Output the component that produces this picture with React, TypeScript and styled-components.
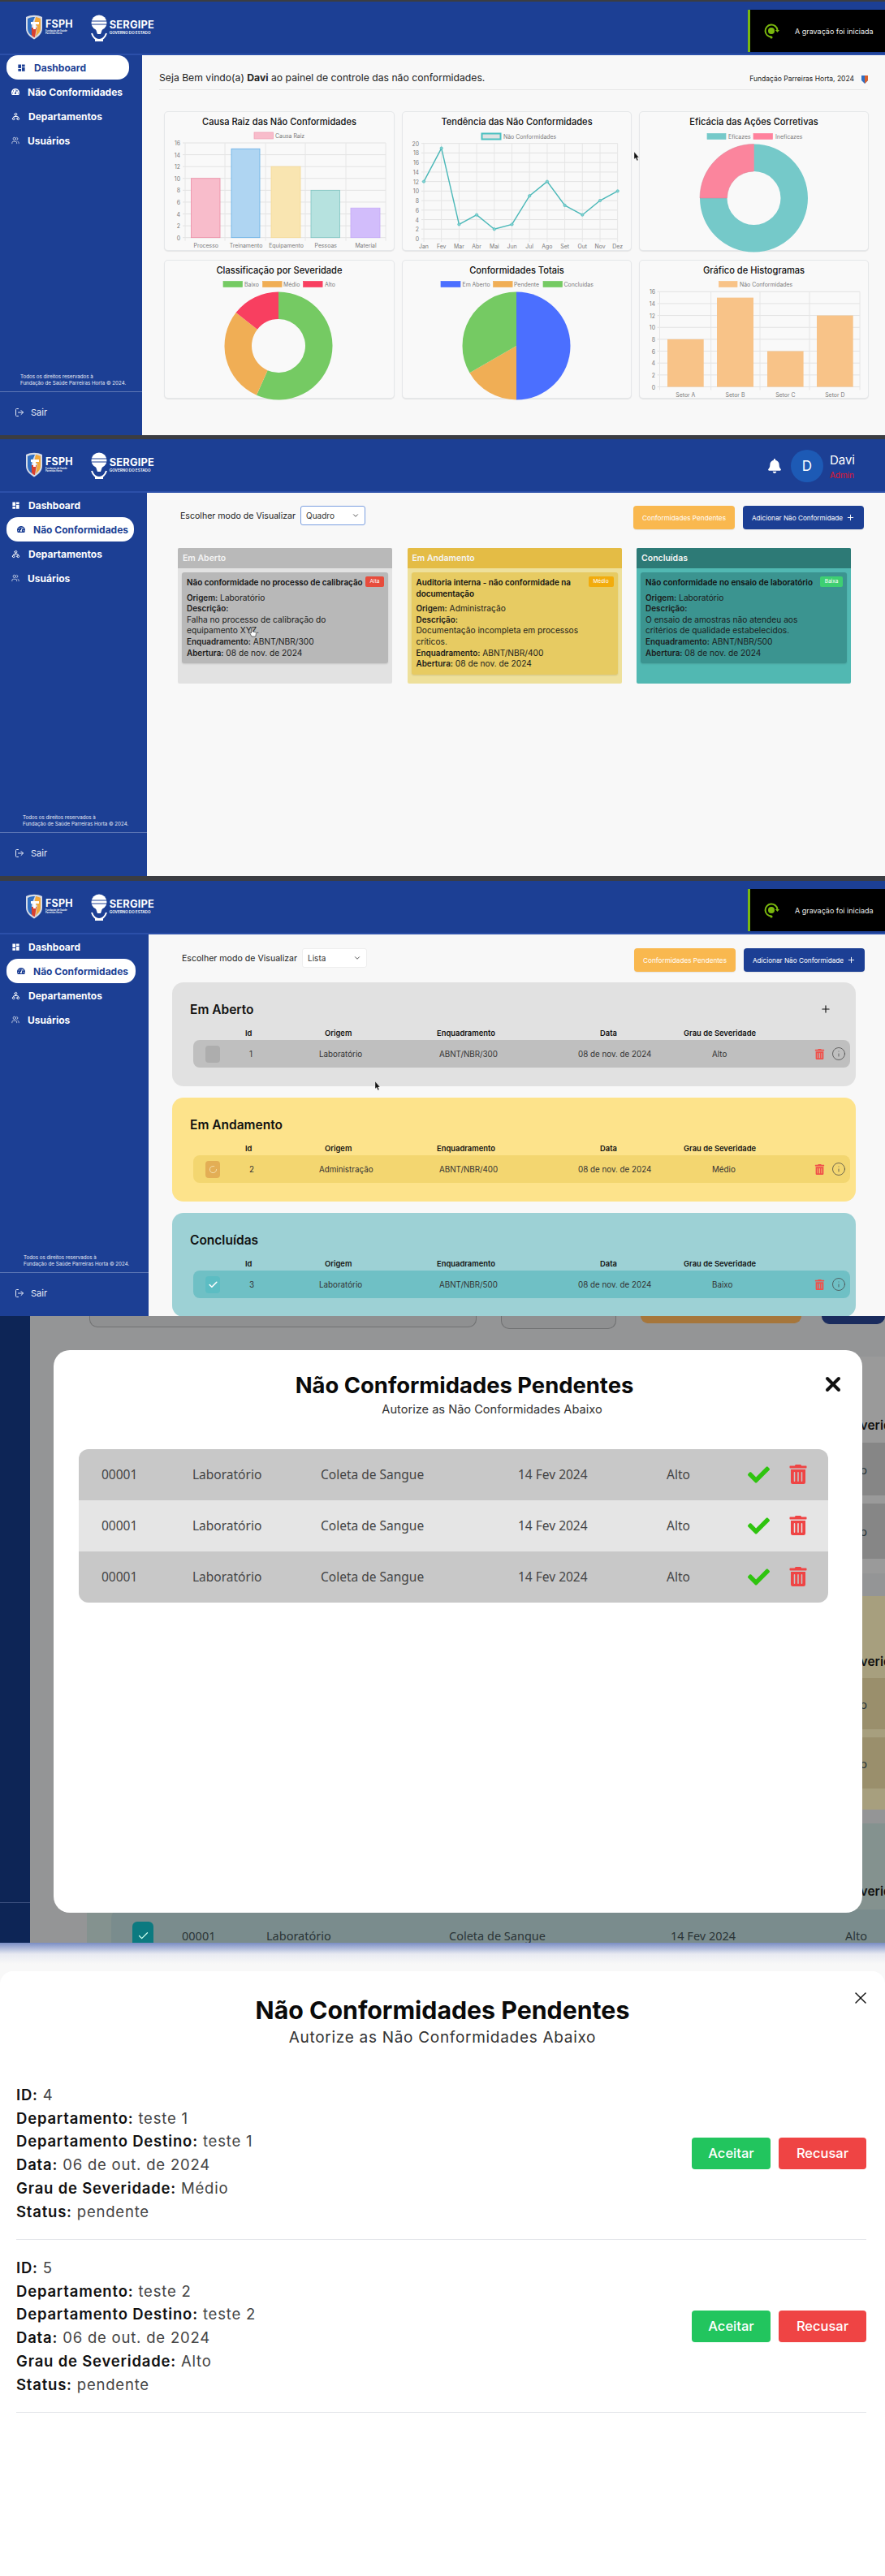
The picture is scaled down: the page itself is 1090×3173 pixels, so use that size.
import React from "react";
import styled, { createGlobalStyle } from "styled-components";
import { Check, ChevronDown, GitFork, Info, LoaderCircle, LogOut, Plus, Users, X } from "lucide-react";
import { FaBell, FaCheck, FaTachometerAlt, FaTrashAlt } from "react-icons/fa";
import { MdDashboard } from "react-icons/md";

const Global = createGlobalStyle`
  html, body { margin: 0; padding: 0; background: #fff; }
  * { box-sizing: border-box; }
  body { font-family: Inter, "Noto Sans", "Liberation Sans", sans-serif; color: #111; }
`;

const BLUE = "#1c3f94";

const Page = styled.div`width: 1090px; display: flex; flex-direction: column;`;
const Frame = styled.section<{ $h: number }>`height: ${p => p.$h}px; display: flex; flex-direction: column; overflow: hidden; position: relative;`;
const TopLine = styled.div<{ $h: number }>`height: ${p => p.$h}px; background: #3b3d42; flex: none;`;
const Header = styled.header`flex: none; height: 66px; background: ${BLUE}; border-bottom: 2px solid #2b4fa9; display: flex; align-items: flex-start; justify-content: space-between; padding: 16px 37px 0 31px; position: relative;`;
const Logos = styled.div`display: flex; align-items: flex-start; gap: 22px;`;
const Logo = styled.div`display: flex; gap: 3px; align-items: center; color: #fff;`;
const LogoText = styled.div`display: flex; flex-direction: column; line-height: 1;`;
const LogoName = styled.span<{ $size: number }>`font-size: ${p => p.$size}px; font-weight: 700; letter-spacing: .2px;`;
const LogoSub = styled.span<{ $size: number }>`font-size: ${p => p.$size}px; font-weight: 600; margin-top: 1px; white-space: nowrap;`;
const Toast = styled.div<{ $top: number }>`position: absolute; left: 921px; top: ${p => p.$top}px; width: 169px; height: 52px; background: #000; border-left: 3px solid #7ab80e; display: flex; align-items: center; gap: 16px; padding-left: 15px; color: #eee; font-size: 9px; white-space: nowrap;`;
const UserBox = styled.div`display: flex; align-items: center; margin-top: -3px;`;
const Bell = styled.span`color: #fff; font-size: 18px; display: flex; margin-right: 11px;`;
const Avatar = styled.div`width: 40px; height: 40px; border-radius: 50%; background: #1d5ab5; color: #fff; display: flex; align-items: center; justify-content: center; font-size: 17px; margin-right: 8px;`;
const UserText = styled.div`display: flex; flex-direction: column; line-height: 1; gap: 6px;`;
const UserName = styled.span`color: #fff; font-size: 15px;`;
const UserRole = styled.span`color: #e5132b; font-size: 10px;`;
const Body = styled.div`flex: 1; min-height: 0; display: flex;`;
const Sidebar = styled.aside<{ $w: number }>`flex: none; width: ${p => p.$w}px; background: ${BLUE}; display: flex; flex-direction: column; color: #fff;`;
const Nav = styled.nav`flex: 1; display: flex; flex-direction: column;`;
const NavItem = styled.div<{ $on?: boolean }>`height: 30px; display: flex; align-items: center; font-size: 12px; font-weight: 700; white-space: nowrap;
  ${p => p.$on ? `background:#fff; color:${BLUE}; border-radius: 14px; margin: 0 16px 0 8px; padding-left: 13px; gap: 10px;` : `color:#fff; padding-left: 14px; gap: 10px;`}`;
const SideNote = styled.p<{ $pad: number }>`margin: 0; padding: 0 0 5px ${p => p.$pad}px; font-size: 6.2px; line-height: 8.6px; color: #e8ecf6; white-space: nowrap;`;
const Exit = styled.div`height: 54px; border-top: 1px solid #5d77b5; display: flex; align-items: center; gap: 8px; padding: 0 0 4px 18px; font-size: 11px; color: #e9edf7;`;
const Main = styled.main`flex: 1; min-width: 0; background: #f8f8f8; display: flex; flex-direction: column;`;

const WelcomeBar = styled.div`margin: 0 21px; padding-top: 20px; height: 43px; border-bottom: 1px solid #e6e6e6; display: flex; justify-content: space-between;`;
const Welcome = styled.span`font-size: 12.2px; color: #222; white-space: nowrap;`;
const Org = styled.span`font-size: 8.5px; color: #222; display: flex; align-items: center; gap: 9px; height: 18px; white-space: nowrap;`;
const ChartGrid = styled.div`margin: 27px 21px 0 28px; display: grid; grid-template-columns: 282px 281px 281px; grid-template-rows: 170px 169px; column-gap: 11px; row-gap: 13px;`;
const Card = styled.div`background: #f9f9f9; border-radius: 4px; box-shadow: 0 0 0 1px #e5e7e9, 0 1px 1px 1px #e4e4e4; display: flex; flex-direction: column;`;
const CardTitle = styled.h3`margin: 0; height: 30px; padding-top: 3px; line-height: 18px; font-size: 11.1px; font-weight: 500; text-align: center; color: #111; white-space: nowrap;`;
const ChartSvg = styled.svg`display: block; overflow: visible; font-family: Inter, sans-serif; font-size: 6.9px; fill: #7a7a7a;`;

const Toolbar = styled.div<{ $pad: string }>`padding: ${p => p.$pad}; display: flex; justify-content: space-between; align-items: flex-start; flex: none;`;
const ModeGroup = styled.div`display: flex; align-items: center; gap: 6px; height: 24px;`;
const ModeLabel = styled.span`font-size: 10.6px; color: #222; white-space: nowrap;`;
const SelectBox = styled.div<{ $focus?: boolean }>`width: 80px; height: 24px; background: #fff; border-radius: 3px; border: 1px solid ${p => p.$focus ? "#7c9fe0" : "#eeeeee"}; display: flex; align-items: center; justify-content: space-between; padding: 0 6px; font-size: 10px; color: #333;`;
const Actions = styled.div`display: flex; gap: 10px;`;
const ActionBtn = styled.div<{ $bg: string; $w: number }>`width: ${p => p.$w}px; height: 29px; background: ${p => p.$bg}; border-radius: 4px; color: #fff; font-size: 8.2px; display: flex; align-items: center; justify-content: center; gap: 4px; white-space: nowrap; box-shadow: 0 1px 1px rgba(0,0,0,.08);`;

const Board = styled.div`margin: 23px 0 0 38px; display: grid; grid-template-columns: 264px 264px 264px; column-gap: 18.5px;`;
const Column = styled.div<{ $bg: string }>`height: 167px; background: ${p => p.$bg}; border-radius: 2px; overflow: hidden;`;
const ColumnHead = styled.div<{ $bg: string }>`height: 25px; background: ${p => p.$bg}; color: #f4f4f4; font-size: 10.5px; font-weight: 600; padding-left: 6px; display: flex; align-items: center;`;
const Ticket = styled.article<{ $bg: string }>`margin: 5px 5px 0; background: ${p => p.$bg}; border-radius: 3px; padding: 6px 5px 6px 6px; font-size: 10.2px; line-height: 13.6px; color: #1b1b1b; box-shadow: 0 1px 2px rgba(0,0,0,.12);`;
const TicketTop = styled.div`display: flex; justify-content: space-between; align-items: flex-start; margin-bottom: 5px;`;
const TicketTitle = styled.strong`font-size: 9.9px; font-weight: 600; color: #111; white-space: nowrap;`;
const Badge = styled.span<{ $bg: string; $w: number }>`flex: none; width: ${p => p.$w}px; height: 13px; margin-top: -1px; background: ${p => p.$bg}; border-radius: 2px; color: #fff; font-size: 6.5px; line-height: 13px; text-align: center;`;
const Line = styled.div`white-space: nowrap;`;
const Key = styled.b`font-size: 9.9px; font-weight: 600;`;

const Panels = styled.div`margin: 13px 0 0 29px; width: 842px; display: flex; flex-direction: column; gap: 14px;`;
const Panel = styled.div<{ $bg: string }>`flex: none; height: 128px; background: ${p => p.$bg}; border-radius: 14px;`;
const PanelTop = styled.div`height: 43px; padding: 23px 30px 0 22px; display: flex; justify-content: space-between; align-items: center;`;
const PanelTitle = styled.h2`margin: 0; font-size: 15.5px; font-weight: 600; color: #111;`;
const HeadRow = styled.div`margin: 11px 0 0 26px; height: 17px; display: grid; grid-template-columns: 64px 98px 138px 201px 103px auto; font-size: 9.4px; font-weight: 600; line-height: 17px; color: #111; white-space: nowrap;`;
const ItemRow = styled.div<{ $bg: string }>`margin: 0 7px 0 26px; height: 34px; padding-left: 15px; border-radius: 8px; background: ${p => p.$bg}; display: grid; grid-template-columns: 54px 86px 148px 171px 165px 126px auto; align-items: center; font-size: 9.8px; color: #333; white-space: nowrap;`;
const Tick = styled.div<{ $bg: string }>`width: 18px; height: 21px; border-radius: 4px; background: ${p => p.$bg}; color: #fff; display: flex; align-items: center; justify-content: center;`;
const RowTools = styled.div`display: flex; align-items: center; gap: 8px;`;
const Trash = styled.span<{ $size: number; $c: string }>`display: flex; color: ${p => p.$c}; font-size: ${p => p.$size}px;`;

const Dim = styled.div`height: 100%; display: flex; background: #949596;`;
const NavyStrip = styled.div`flex: none; width: 37px; background: #0d2556;`;
const NavyTop = styled.div`height: 723px; border-bottom: 1px solid #3a4f7d;`;
const DimContent = styled.div`flex: 1; min-width: 0; display: flex; flex-direction: column;`;
const DimTop = styled.div`height: 50px; flex: none; padding-left: 73px; display: flex; align-items: flex-start;`;
const GhostBox = styled.div<{ $w: number; $h: number; $bg: string; $ml: number }>`width: ${p => p.$w}px; height: ${p => p.$h}px; margin-left: ${p => p.$ml}px; background: ${p => p.$bg}; border-radius: 0 0 10px 10px; border: 1px solid ${p => p.$bg === "#8f9091" ? "#707172" : p.$bg}; border-top: 0;`;
const GhostPanel = styled.div<{ $bg: string; $pad: number; $bottom: number; $gap: number }>`flex: none; margin-left: 70px; padding: ${p => p.$pad}px 0 ${p => p.$bottom}px 30px; margin-bottom: ${p => p.$gap}px; background: ${p => p.$bg}; border-radius: 14px 0 0 14px;`;
const GhostHead = styled.div`height: 20px; line-height: 20px; padding-left: 841px; font-size: 15.5px; font-weight: 600; color: #111; white-space: nowrap;`;
const GhostRow = styled.div<{ $bg: string; $h: number; $mt: number }>`height: ${p => p.$h}px; margin-top: ${p => p.$mt}px; padding-left: 26px; background: ${p => p.$bg}; border-radius: 10px 0 0 10px; display: grid; grid-template-columns: 61px 104px 225px 273px 215px 60px; align-items: center; font-family: "Noto Sans", sans-serif; font-size: 14.5px; color: #2b3538; white-space: nowrap;`;
const GhostCell = styled.span<{ $pos?: number }>`${p => p.$pos ? `grid-column: ${p.$pos};` : ""}`;
const GhostTick = styled.div`width: 26px; height: 36px; border-radius: 6px; background: #0c7a80; color: #cfe; display: flex; align-items: center; justify-content: center; margin-top: 2px;`;

const ModalBox = styled.div`position: absolute; left: 66px; top: 42px; width: 996px; height: 693px; background: #fff; border-radius: 20px; padding-top: 26px;`;
const ModalTitle = styled.h2<{ $size: number; $shift: number }>`margin: 0; padding-left: ${p => p.$shift}px; font-size: ${p => p.$size}px; line-height: 1.3; font-weight: 700; text-align: center; color: #0a0a0a; white-space: nowrap;`;
const ModalSub = styled.p<{ $size: number; $shift: number; $track: number }>`margin: 2px 0 0; padding-left: ${p => p.$shift}px; font-size: ${p => p.$size}px; letter-spacing: ${p => p.$track}px; text-align: center; color: #333; white-space: nowrap;`;
const CloseBtn = styled.span<{ $r: number; $t: number }>`position: absolute; right: ${p => p.$r}px; top: ${p => p.$t}px; display: flex; color: #111;`;
const PendingTable = styled.div`margin: 40px 0 0 31px; width: 923px; border-radius: 12px; overflow: hidden;`;
const PendingRow = styled.div<{ $bg: string }>`height: 63px; background: ${p => p.$bg}; padding-left: 28px; display: grid; grid-template-columns: 112px 158px 243px 183px 100px 50px auto; align-items: center; font-family: "Noto Sans", sans-serif; font-size: 15.5px; color: #444;`;
const CheckMark = styled.span`display: flex; color: #2fc40f; font-size: 27px;`;

const SheetFrame = styled.div`height: 100%; background: linear-gradient(#7a8dc4 0, #e8eaf2 14px, #f8f8f8 26px); padding-top: 35px; display: flex;`;
const Sheet = styled.div`flex: 1; background: #fff; border-radius: 16px 16px 0 0; padding-top: 29px; position: relative;`;
const SheetList = styled.div`margin: 25px 23px 0 20px;`;
const Item = styled.div`display: flex; justify-content: space-between; align-items: center; padding: 20px 0; height: 213px; border-bottom: 1px solid #e5e7eb;`;
const ItemLines = styled.div`font-size: 18.5px; letter-spacing: .8px; line-height: 28.9px; color: #444; white-space: nowrap;`;
const ItemKey = styled.b`font-weight: 600; color: #111;`;
const Decide = styled.div`display: flex; gap: 10px;`;
const DecideBtn = styled.div<{ $bg: string; $w: number }>`width: ${p => p.$w}px; height: 39px; background: ${p => p.$bg}; color: #fff; border-radius: 4px; font-size: 16.5px; font-weight: 500; display: flex; align-items: center; justify-content: center;`;
const Cursor = styled.svg<{ $x: number; $y: number }>`position: absolute; left: ${p => p.$x}px; top: ${p => p.$y}px;`;

/* ---------- logos ---------- */
const LogoBar = () => (
  <Logos>
    <Logo>
      <svg width="22" height="31" viewBox="0 0 22 31">
        <path d="M1 3 C7 0 15 0 21 3 L21 17 C21 24 15 28 11 30.5 C7 28 1 24 1 17 Z" fill="#d6dbe6" />
        <path d="M3 5 C7 3 10 3 12 3 L8 12 L8 26 C5 24 3 21 3 17 Z" fill="#2f6fc4" />
        <path d="M8 16 L14 16 L12 28 C10 28 8 26 8 25 Z" fill="#d8402f" />
        <path d="M13 3 C15 3 17 4 19 5 L19 17 C19 21 16 24 13 27 L15 14 L11 12 Z" fill="#f2a93b" />
        <path d="M7 9 L17 9 L17 12 L13 12 L13 18 L10 18 L10 12 L7 12 Z" fill="#fff" />
      </svg>
      <LogoText>
        <LogoName $size={12.5}>FSPH</LogoName>
        <LogoSub $size={2.8}>Fundação de Saúde<br />Parreiras Horta</LogoSub>
      </LogoText>
    </Logo>
    <Logo>
      <svg width="20" height="33" viewBox="0 0 20 33">
        <circle cx="10" cy="10" r="9.5" fill="#fff" />
        <path d="M1 8 H19 M1 12 H19" stroke={BLUE} strokeWidth="1" />
        <path d="M6 18 L8 24 H12 L14 18 Z" fill="#fff" />
        <path d="M1 23 C3 29 7 31 10 31 C13 31 17 29 19 23" fill="none" stroke="#fff" strokeWidth="2" />
        <rect x="5" y="30" width="10" height="3" fill="#fff" />
      </svg>
      <LogoText>
        <LogoName $size={12.8}>SERGIPE</LogoName>
        <LogoSub $size={4.6}>GOVERNO DO ESTADO</LogoSub>
      </LogoText>
    </Logo>
  </Logos>
);

const RecToast = ({ top }: { top: number }) => (
  <Toast $top={top}>
    <svg width="24" height="24" viewBox="0 0 24 24" fill="none">
      <circle cx="11" cy="12" r="4" fill="#7ab80e" />
      <path d="M18.5 11 A7.5 7.5 0 1 0 11 19.5" stroke="#7ab80e" strokeWidth="2" />
      <circle cx="11" cy="20" r="1.6" fill="#7ab80e" />
      <path d="M15.8 11 L21 11 L18.5 14 Z" fill="#7ab80e" />
    </svg>
    A gravação foi iniciada
  </Toast>
);

/* ---------- shell ---------- */
const items = ["Dashboard", "Não Conformidades", "Departamentos", "Usuários"];
const navIcon = (i: number) =>
  i === 0 ? <MdDashboard size={11} /> : i === 1 ? <FaTachometerAlt size={10} /> : i === 2 ? <GitFork size={11} style={{ transform: "rotate(180deg)" }} /> : <Users size={10} strokeWidth={1.5} />;

const Shell = ({ h, line, w, active, right, toastTop, children }: { h: number; line: number; w: number; active: number; right?: React.ReactNode; toastTop?: number; children: React.ReactNode }) => (
  <Frame $h={h}>
    <TopLine $h={line} />
    <Header>
      <LogoBar />
      {right}
    </Header>
    {toastTop !== undefined && <RecToast top={toastTop} />}
    <Body>
      <Sidebar $w={w}>
        <Nav>
          {items.map((t, i) => (
            <NavItem key={t} $on={i === active}>{navIcon(i)}{t}</NavItem>
          ))}
        </Nav>
        <SideNote $pad={(w - 125) / 2}>Todos os direitos reservados à<br />Fundação de Saúde Parreiras Horta © 2024.</SideNote>
        <Exit><LogOut size={12} />Sair</Exit>
      </Sidebar>
      <Main>{children}</Main>
    </Body>
  </Frame>
);

/* ---------- charts ---------- */
type Leg = { x: number; w: number; fill: string; stroke?: string; tx: number; t: string };
const Legend = ({ y, h, items }: { y: number; h: number; items: Leg[] }) => (
  <g>
    {items.map(l => (
      <g key={l.t}>
        <rect x={l.x} y={y - h / 2} width={l.w} height={h} fill={l.fill} stroke={l.stroke || l.fill} strokeWidth={l.stroke === "#4bc0c0" ? 2 : 0.7} />
        <text x={l.tx} y={y + 2.5}>{l.t}</text>
      </g>
    ))}
  </g>
);

const GridY = ({ x0, x1, y0, yTop, n, max, lx }: { x0: number; x1: number; y0: number; yTop: number; n: number; max: number; lx: number }) => (
  <g>
    {Array.from({ length: n + 1 }, (_, i) => {
      const y = y0 + (yTop - y0) * i / n;
      return (
        <g key={i}>
          <line x1={x0 - 3} x2={x1} y1={y} y2={y} stroke="#e2e2e2" strokeWidth="1" />
          <text x={lx} y={y + 3} textAnchor="end">{max * i / n}</text>
        </g>
      );
    })}
  </g>
);

const GridX = ({ xs, y0, yTop }: { xs: number[]; y0: number; yTop: number }) => (
  <g>{xs.map(x => <line key={x} x1={x} x2={x} y1={yTop} y2={y0 + 4} stroke="#e6e6e6" strokeWidth="1" />)}</g>
);

const polar = (cx: number, cy: number, r: number, deg: number): [number, number] => {
  const a = (deg - 90) * Math.PI / 180;
  return [cx + r * Math.cos(a), cy + r * Math.sin(a)];
};
const arc = (cx: number, cy: number, R: number, r: number, a: number, b: number) => {
  const [x1, y1] = polar(cx, cy, R, a);
  const [x2, y2] = polar(cx, cy, R, b);
  const large = b - a > 180 ? 1 : 0;
  if (r === 0) return `M${cx} ${cy} L${x1} ${y1} A${R} ${R} 0 ${large} 1 ${x2} ${y2} Z`;
  const [x3, y3] = polar(cx, cy, r, b);
  const [x4, y4] = polar(cx, cy, r, a);
  return `M${x1} ${y1} A${R} ${R} 0 ${large} 1 ${x2} ${y2} L${x3} ${y3} A${r} ${r} 0 ${large} 0 ${x4} ${y4} Z`;
};

const View = ({ x, y, w, h, children }: { x: number; y: number; w: number; h: number; children: React.ReactNode }) => (
  <ChartSvg width={w} height={h - 30} viewBox={`${x} ${y + 30} ${w} ${h - 30}`}>{children}</ChartSvg>
);

const RootCause = () => {
  const y0 = 292.7, top = 176, x = [228, 277, 327, 376, 426, 475];
  const sc = (v: number) => y0 - (y0 - top) * v / 16;
  const bars = [
    { l: "Processo", a: 235.5, b: 271, v: 10, f: "#f8bccb", s: "#ec8ba4" },
    { l: "Treinamento", a: 285, b: 320, v: 15, f: "#afd5f2", s: "#63aee6" },
    { l: "Equipamento", a: 334, b: 370, v: 12, f: "#f9e5b1", s: "#f6d995" },
    { l: "Pessoas", a: 383, b: 418.5, v: 8, f: "#b6e2df", s: "#7cc4c0" },
    { l: "Material", a: 432, b: 468, v: 5, f: "#d2bdfb", s: "#c4a8f8" },
  ];
  return (
    <View x={203} y={138} w={282} h={170}>
      <Legend y={167} h={8} items={[{ x: 313, w: 23.5, fill: "#f8bccb", stroke: "#f09db3", tx: 339, t: "Causa Raiz" }]} />
      <GridY x0={228} x1={475} y0={y0} yTop={top} n={8} max={16} lx={222} />
      <GridX xs={x} y0={y0} yTop={top} />
      {bars.map(b => (
        <g key={b.l}>
          <rect x={b.a} y={sc(b.v)} width={b.b - b.a} height={y0 - sc(b.v)} fill={b.f} stroke={b.s} strokeWidth="0.8" />
          <text x={(b.a + b.b) / 2 + 0.5} y={305} textAnchor="middle">{b.l}</text>
        </g>
      ))}
    </View>
  );
};

const Trend = () => {
  const x0 = 522, dx = 21.7, y0 = 294, top = 176.7;
  const vals = [12, 19, 3, 5, 2, 3, 9, 12, 7, 5, 8, 10];
  const m = ["Jan", "Fev", "Mar", "Abr", "Mai", "Jun", "Jul", "Ago", "Set", "Out", "Nov", "Dez"];
  const pts = vals.map((v, i) => [x0 + dx * i, y0 - (y0 - top) * v / 20]);
  return (
    <View x={496} y={138} w={281} h={170}>
      <Legend y={168} h={7} items={[{ x: 593.5, w: 23, fill: "#dfe3e3", stroke: "#4bc0c0", tx: 620, t: "Não Conformidades" }]} />
      <GridY x0={522} x1={760.6} y0={y0} yTop={top} n={10} max={20} lx={516} />
      <GridX xs={pts.map(p => p[0])} y0={y0} yTop={top} />
      <polyline points={pts.map(p => p.join(",")).join(" ")} fill="none" stroke="#4bb8b8" strokeWidth="1.4" />
      {pts.map((p, i) => (
        <g key={m[i]}>
          <circle cx={p[0]} cy={p[1]} r="1.7" fill="#7fd0d0" stroke="#4bb8b8" strokeWidth=".6" />
          <text x={p[0]} y={306} textAnchor="middle">{m[i]}</text>
        </g>
      ))}
    </View>
  );
};

const Efficacy = () => (
  <View x={788} y={138} w={281} h={170}>
    <Legend y={168} h={7} items={[
      { x: 871, w: 23, fill: "#75c9c9", tx: 897, t: "Eficazes" },
      { x: 928, w: 23.5, fill: "#ff829d", tx: 955, t: "Ineficazes" },
    ]} />
    <path d={arc(928.5, 244, 66.5, 33, 0, 270)} fill="#75c9c9" />
    <path d={arc(928.5, 244, 66.5, 33, 270, 360)} fill="#fb859d" stroke="#d77d90" strokeWidth=".5" />
  </View>
);

const Severity = () => (
  <View x={203} y={321} w={282} h={169}>
    <Legend y={350} h={7} items={[
      { x: 275, w: 23.5, fill: "#75ca63", tx: 301, t: "Baixo" },
      { x: 323.6, w: 23.5, fill: "#f0ae55", tx: 349, t: "Médio" },
      { x: 373.6, w: 23.5, fill: "#f83f60", tx: 400, t: "Alto" },
    ]} />
    <path d={arc(343, 426, 66.5, 33, 0, 204)} fill="#75ca63" />
    <path d={arc(343, 426, 66.5, 33, 204, 308)} fill="#f0ae55" />
    <path d={arc(343, 426, 66.5, 33, 308, 360)} fill="#f83f60" />
  </View>
);

const Totals = () => (
  <View x={496} y={321} w={281} h={169}>
    <Legend y={350} h={7} items={[
      { x: 543, w: 24, fill: "#4b6fff", tx: 569.5, t: "Em Aberto" },
      { x: 607.6, w: 23.5, fill: "#f0ae55", tx: 633, t: "Pendente" },
      { x: 669, w: 23.5, fill: "#75ca63", tx: 694.5, t: "Concluídas" },
    ]} />
    <path d={arc(636, 426, 66.5, 0, 0, 180)} fill="#4b6fff" />
    <path d={arc(636, 426, 66.5, 0, 180, 240)} fill="#f0ae55" />
    <path d={arc(636, 426, 66.5, 0, 240, 360)} fill="#75ca63" />
  </View>
);

const Histogram = () => {
  const y0 = 476.5, top = 359.3;
  const sc = (v: number) => y0 - (y0 - top) * v / 16;
  const bars = [
    { l: "Setor A", a: 822, b: 866.7, v: 8 },
    { l: "Setor B", a: 883, b: 928, v: 15 },
    { l: "Setor C", a: 945, b: 989.6, v: 6 },
    { l: "Setor D", a: 1006, b: 1050.7, v: 12 },
  ];
  return (
    <View x={788} y={321} w={281} h={169}>
      <Legend y={350} h={7} items={[{ x: 885.4, w: 22.6, fill: "#f8c388", tx: 911, t: "Não Conformidades" }]} />
      <GridY x0={812.5} x1={1059} y0={y0} yTop={top} n={8} max={16} lx={807} />
      <GridX xs={[812.5, 875.7, 936, 997, 1059]} y0={y0} yTop={top} />
      {bars.map(b => (
        <g key={b.l}>
          <rect x={b.a} y={sc(b.v)} width={b.b - b.a} height={y0 - sc(b.v)} fill="#f8c388" />
          <text x={(b.a + b.b) / 2} y={489} textAnchor="middle">{b.l}</text>
        </g>
      ))}
    </View>
  );
};

const Pointer = ({ x, y }: { x: number; y: number }) => (
  <Cursor $x={x} $y={y} width="8" height="12" viewBox="0 0 8 12"><path d="M1 0 L1 9 L3 7.5 L4.5 11 L6 10.3 L4.6 7 L7 7 Z" fill="#111" stroke="#fff" strokeWidth=".4" /></Cursor>
);

const HandCursor = styled.svg`position: absolute; left: 307px; top: 236px;`;

/* ---------- list + kanban data ---------- */
const Toolbar2 = ({ mode, focus, pad }: { mode: string; focus?: boolean; pad: string }) => (
  <Toolbar $pad={pad}>
    <ModeGroup>
      <ModeLabel>Escolher modo de Visualizar</ModeLabel>
      <SelectBox $focus={focus}>{mode}<ChevronDown size={10} /></SelectBox>
    </ModeGroup>
    <Actions>
      <ActionBtn $bg="#f9b84f" $w={125}>Conformidades Pendentes</ActionBtn>
      <ActionBtn $bg={BLUE} $w={149}>Adicionar Não Conformidade<Plus size={11} /></ActionBtn>
    </Actions>
  </Toolbar>
);

const ListPanel = ({ title, bg, row, tickBg, tick, id, origem, enq, grau, plus }: { title: string; bg: string; row: string; tickBg: string; tick?: React.ReactNode; id: number; origem: string; enq: string; grau: string; plus?: boolean }) => (
  <Panel $bg={bg}>
    <PanelTop>
      <PanelTitle>{title}</PanelTitle>
      {plus && <Plus size={14} color="#111" />}
    </PanelTop>
    <HeadRow>
      <span />
      <span>Id</span>
      <span>Origem</span>
      <span>Enquadramento</span>
      <span>Data</span>
      <span>Grau de Severidade</span>
    </HeadRow>
    <ItemRow $bg={row}>
      <Tick $bg={tickBg}>{tick}</Tick>
      <span>{id}</span>
      <span>{origem}</span>
      <span>{enq}</span>
      <span>08 de nov. de 2024</span>
      <span>{grau}</span>
      <RowTools>
        <Trash $size={13} $c="#f0504a"><FaTrashAlt /></Trash>
        <Info size={18} strokeWidth={1} color="#444" />
      </RowTools>
    </ItemRow>
  </Panel>
);

const pendingRows = ["#c8c8c8", "#e5e5e5", "#c8c8c8"];

const Pending = ({ id, dep, data, grau }: { id: number; dep: string; data: string; grau: string }) => (
  <Item>
    <ItemLines>
      <div><ItemKey>ID:</ItemKey> {id}</div>
      <div><ItemKey>Departamento:</ItemKey> {dep}</div>
      <div><ItemKey>Departamento Destino:</ItemKey> {dep}</div>
      <div><ItemKey>Data:</ItemKey> {data}</div>
      <div><ItemKey>Grau de Severidade:</ItemKey> {grau}</div>
      <div><ItemKey>Status:</ItemKey> pendente</div>
    </ItemLines>
    <Decide>
      <DecideBtn $bg="#22c55e" $w={97}>Aceitar</DecideBtn>
      <DecideBtn $bg="#ef4444" $w={108}>Recusar</DecideBtn>
    </Decide>
  </Item>
);

export default function App() {
  return (
    <Page>
      <Global />
      {/* Dashboard */}
      <Shell h={536} line={2} w={175} active={0} toastTop={12}>
        <WelcomeBar>
          <Welcome>Seja Bem vindo(a) <b>Davi</b> ao painel de controle das não conformidades.</Welcome>
          <Org>Fundação Parreiras Horta, 2024
            <svg width="8" height="11" viewBox="0 0 8 11"><path d="M0 1 H8 V7 L4 11 L0 7 Z" fill="#2f6fc4" /><path d="M4 1 H8 V7 L4 11 Z" fill="#d8602f" /></svg>
          </Org>
        </WelcomeBar>
        <ChartGrid>
          <Card><CardTitle>Causa Raiz das Não Conformidades</CardTitle><RootCause /></Card>
          <Card><CardTitle>Tendência das Não Conformidades</CardTitle><Trend /></Card>
          <Card><CardTitle>Eficácia das Ações Corretivas</CardTitle><Efficacy /></Card>
          <Card><CardTitle>Classificação por Severidade</CardTitle><Severity /></Card>
          <Card><CardTitle>Conformidades Totais</CardTitle><Totals /></Card>
          <Card><CardTitle>Gráfico de Histogramas</CardTitle><Histogram /></Card>
        </ChartGrid>
        <Pointer x={780} y={187} />
      </Shell>

      {/* Kanban */}
      <Shell h={543} line={5} w={181} active={1} right={
        <UserBox>
          <Bell><FaBell /></Bell>
          <Avatar>D</Avatar>
          <UserText><UserName>Davi</UserName><UserRole>Admin</UserRole></UserText>
        </UserBox>
      }>
        <Toolbar2 mode="Quadro" focus pad="16px 26px 0 41px" />
        <Board>
          <Column $bg="#e2e2e2">
            <ColumnHead $bg="#b9b9b9">Em Aberto</ColumnHead>
            <Ticket $bg="#b8b8b8">
              <TicketTop><TicketTitle>Não conformidade no processo de calibração</TicketTitle><Badge $bg="#e74c3c" $w={23}>Alta</Badge></TicketTop>
              <Line><Key>Origem:</Key> Laboratório</Line>
              <Line><Key>Descrição:</Key></Line>
              <Line>Falha no processo de calibração do<br />equipamento XYZ.</Line>
              <Line><Key>Enquadramento:</Key> ABNT/NBR/300</Line>
              <Line><Key>Abertura:</Key> 08 de nov. de 2024</Line>
            </Ticket>
          </Column>
          <Column $bg="#eee09b">
            <ColumnHead $bg="#e4bc45">Em Andamento</ColumnHead>
            <Ticket $bg="#e7cb62">
              <TicketTop><TicketTitle>Auditoria interna - não conformidade na<br />documentação</TicketTitle><Badge $bg="#f2ac0c" $w={31}>Médio</Badge></TicketTop>
              <Line><Key>Origem:</Key> Administração</Line>
              <Line><Key>Descrição:</Key></Line>
              <Line>Documentação incompleta em processos<br />críticos.</Line>
              <Line><Key>Enquadramento:</Key> ABNT/NBR/400</Line>
              <Line><Key>Abertura:</Key> 08 de nov. de 2024</Line>
            </Ticket>
          </Column>
          <Column $bg="#51b8b2">
            <ColumnHead $bg="#2d7a76">Concluídas</ColumnHead>
            <Ticket $bg="#3b9490">
              <TicketTop><TicketTitle>Não conformidade no ensaio de laboratório</TicketTitle><Badge $bg="#3ecf72" $w={28}>Baixa</Badge></TicketTop>
              <Line><Key>Origem:</Key> Laboratório</Line>
              <Line><Key>Descrição:</Key></Line>
              <Line>O ensaio de amostras não atendeu aos<br />critérios de qualidade estabelecidos.</Line>
              <Line><Key>Enquadramento:</Key> ABNT/NBR/500</Line>
              <Line><Key>Abertura:</Key> 08 de nov. de 2024</Line>
            </Ticket>
          </Column>
        </Board>
        <HandCursor width="9" height="13" viewBox="0 0 9 13">
          <path d="M2.5 1 C3.5 0.5 4 1 4 2 L4 6 L7.5 6.6 C8.4 6.9 8.5 7.6 8.4 8.5 L7.8 12 L3 12 L0.8 8 C0.5 7.3 1.2 6.8 2 7.4 L2.5 8 Z" fill="#fff" stroke="#222" strokeWidth=".6" />
        </HandCursor>
      </Shell>

      {/* List */}
      <Shell h={542} line={6} w={183} active={1} toastTop={16}>
        <Toolbar2 mode="Lista" pad="17px 25px 0 41px" />
        <Panels>
          <ListPanel title="Em Aberto" plus bg="#e1e1e1" row="#bfbfbf" tickBg="#adadad" id={1} origem="Laboratório" enq="ABNT/NBR/300" grau="Alto" />
          <ListPanel title="Em Andamento" bg="#fde38b" row="#f3d670" tickBg="#e3ae55" tick={<LoaderCircle size={11} color="#f5e3b5" />} id={2} origem="Administração" enq="ABNT/NBR/400" grau="Médio" />
          <ListPanel title="Concluídas" bg="#9dd1d5" row="#6fc0c5" tickBg="#5cbdc3" tick={<Check size={13} strokeWidth={3} />} id={3} origem="Laboratório" enq="ABNT/NBR/500" grau="Baixo" />
        </Panels>
        <Pointer x={461} y={1332 - 1079} />
      </Shell>

      {/* Modal over dimmed page */}
      <Frame $h={772}>
        <Dim>
          <NavyStrip><NavyTop /></NavyStrip>
          <DimContent>
            <DimTop>
              <GhostBox $w={488} $h={14} $bg="#8f9091" $ml={0} />
              <GhostBox $w={145} $h={16} $bg="#8f9091" $ml={30} />
              <GhostBox $w={202} $h={9} $bg="#a6763b" $ml={30} />
              <GhostBox $w={80} $h={10} $bg="#1a2c5e" $ml={25} />
            </DimTop>
            <GhostPanel $bg="#9a9a9a" $pad={75} $bottom={18} $gap={28}>
              <GhostHead>Grau de Severidade</GhostHead>
              <GhostRow $bg="#868686" $h={65} $mt={11}><GhostCell $pos={6}>Alto</GhostCell></GhostRow>
              <GhostRow $bg="#868686" $h={68} $mt={10}><GhostCell $pos={6}>Alto</GhostCell></GhostRow>
            </GhostPanel>
            <GhostPanel $bg="#a79f7e" $pad={71} $bottom={26} $gap={17}>
              <GhostHead>Grau de Severidade</GhostHead>
              <GhostRow $bg="#9a8f6c" $h={63} $mt={10}><GhostCell $pos={6}>Alto</GhostCell></GhostRow>
              <GhostRow $bg="#9a8f6c" $h={63} $mt={10}><GhostCell $pos={6}>Alto</GhostCell></GhostRow>
            </GhostPanel>
            <GhostPanel $bg="#84928f" $pad={74} $bottom={0} $gap={0}>
              <GhostHead>Grau de Severidade</GhostHead>
              <GhostRow $bg="#7a8c8d" $h={63} $mt={12}>
                <GhostTick><Check size={15} strokeWidth={2} /></GhostTick>
                <GhostCell>00001</GhostCell>
                <GhostCell>Laboratório</GhostCell>
                <GhostCell>Coleta de Sangue</GhostCell>
                <GhostCell>14 Fev 2024</GhostCell>
                <GhostCell>Alto</GhostCell>
              </GhostRow>
            </GhostPanel>
          </DimContent>
        </Dim>
        <ModalBox>
          <ModalTitle $size={27.4} $shift={16}>Não Conformidades Pendentes</ModalTitle>
          <ModalSub $size={14.6} $shift={84} $track={0}>Autorize as Não Conformidades Abaixo</ModalSub>
          <CloseBtn $r={22} $t={28}><X size={28} strokeWidth={3.4} /></CloseBtn>
          <PendingTable>
            {pendingRows.map((bg, i) => (
              <PendingRow key={i} $bg={bg}>
                <span>00001</span>
                <span>Laboratório</span>
                <span>Coleta de Sangue</span>
                <span>14 Fev 2024</span>
                <span>Alto</span>
                <CheckMark><FaCheck /></CheckMark>
                <Trash $size={24} $c="#ef4444"><FaTrashAlt /></Trash>
              </PendingRow>
            ))}
          </PendingTable>
        </ModalBox>
      </Frame>

      {/* Full-width sheet */}
      <Frame $h={780}>
        <SheetFrame>
          <Sheet>
            <ModalTitle $size={30.3} $shift={0}>Não Conformidades Pendentes</ModalTitle>
            <ModalSub $size={19} $shift={0} $track={0.7}>Autorize as Não Conformidades Abaixo</ModalSub>
            <CloseBtn $r={18} $t={21}><X size={24} strokeWidth={1.4} /></CloseBtn>
            <SheetList>
              <Pending id={4} dep="teste 1" data="06 de out. de 2024" grau="Médio" />
              <Pending id={5} dep="teste 2" data="06 de out. de 2024" grau="Alto" />
            </SheetList>
          </Sheet>
        </SheetFrame>
      </Frame>
    </Page>
  );
}
